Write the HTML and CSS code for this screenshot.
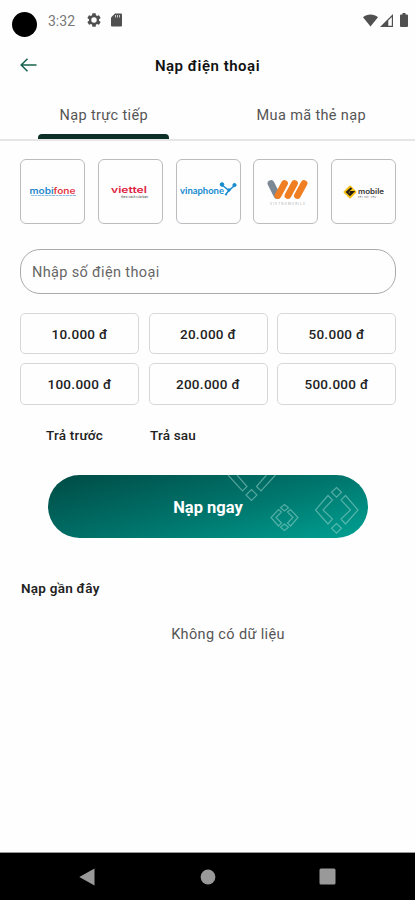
FILE: index.html
```html
<!DOCTYPE html>
<html lang="vi">
<head>
<meta charset="utf-8">
<meta name="viewport" content="width=device-width, initial-scale=1">
<title>Nạp điện thoại</title>
<link rel="stylesheet" href="styles.css">
</head>
<body>
<div class="screen">
  <div class="status">
    <span class="camera"></span>
    <span class="time">3:32</span>
    <svg class="gear" width="14" height="14" viewBox="2 2 20 20"><path fill="#505050" fill-rule="evenodd" d="M19.14 12.94c.04-.3.06-.61.06-.94s-.02-.64-.07-.94l2.03-1.58a.5.5 0 0 0 .12-.61l-1.92-3.32a.5.5 0 0 0-.59-.22l-2.39.96a7 7 0 0 0-1.62-.94l-.36-2.54a.5.5 0 0 0-.48-.41h-3.84a.5.5 0 0 0-.47.41l-.36 2.54a7 7 0 0 0-1.62.94l-2.39-.96a.5.5 0 0 0-.59.22L2.74 8.87a.5.5 0 0 0 .12.61l2.03 1.58a6 6 0 0 0 0 1.88l-2.03 1.58a.5.5 0 0 0-.12.61l1.92 3.32c.12.22.37.29.59.22l2.39-.96c.5.38 1.03.7 1.62.94l.36 2.54c.05.24.24.41.48.41h3.84c.24 0 .44-.17.47-.41l.36-2.54a7 7 0 0 0 1.62-.94l2.39.96c.22.08.47 0 .59-.22l1.92-3.32a.5.5 0 0 0-.12-.61zM12 15.900a3.900 3.900 0 1 1 0-7.800 3.900 3.900 0 0 1 0 7.800z"/></svg>
    <svg class="sd" width="11" height="14" viewBox="0 0 11 14"><path fill="#505050" d="M4 .5h6a1 1 0 0 1 1 1v11a1 1 0 0 1-1 1H1a1 1 0 0 1-1-1v-8z"/><path stroke="#c8c8c8" d="M4.500 2v2.500M6.500 2v2.500M8.500 2v2.500"/></svg>
    <span class="signals">
      <svg width="15" height="13" viewBox="0 0 15 13"><path fill="#505050" d="M0 3.200C4.200-.4 10.800-.4 15 3.200L7.500 12.500z"/></svg>
      <svg width="13" height="13" viewBox="0 0 13 13"><path fill="#505050" d="M0 13 13 0v13z"/><path fill="#fff" d="M8.300 6.500 11.800 3v8.800H8.300z"/></svg>
      <svg class="battery" width="8" height="14" viewBox="0 0 8 14"><path fill="#505050" d="M2.500 0h3v1.500H7a1 1 0 0 1 1 1V13a1 1 0 0 1-1 1H1a1 1 0 0 1-1-1V2.500a1 1 0 0 1 1-1h1.500z"/></svg>
    </span>
  </div>

  <header class="header">
    <svg class="back" width="17" height="14" viewBox="0 0 17 14"><path fill="none" stroke="#17614f" stroke-width="1.500" d="M16.500 7H1.200M7.500.7 1.200 7l6.300 6.300"/></svg>
    <h1 class="title">Nạp điện thoại</h1>
  </header>

  <nav class="tabs">
    <div class="tab active"><span>Nạp trực tiếp</span></div>
    <div class="tab"><span>Mua mã thẻ nạp</span></div>
  </nav>

  <main class="content">
    <div class="carriers">
      <div class="carrier">
        <svg viewBox="0 0 63 63"><text class="mobi" x="8.500" y="33.500" textLength="46" lengthAdjust="spacingAndGlyphs"><tspan fill="#2587cb">mobi</tspan><tspan fill="#e63a48">fone</tspan></text><path stroke="#8dbce0" stroke-width="1" stroke-dasharray="3 .5" d="M10 35.500h45"/></svg>
      </div>
      <div class="carrier">
        <svg viewBox="0 0 63 63"><text class="viettel" x="12" y="32.500" textLength="36" lengthAdjust="spacingAndGlyphs">viettel</text><text class="tiny" x="22" y="37.500" textLength="27" fill="#333">theo cách của bạn</text></svg>
      </div>
      <div class="carrier">
        <svg viewBox="0 0 63 63"><text class="vina" x="3" y="34" textLength="44" lengthAdjust="spacingAndGlyphs">vinaphone</text><g fill="#178bcf" stroke="#178bcf"><path fill="none" stroke-width="1.500" d="m45 25 7 5.500 6-5.500M52 30.500 49 34"/><circle cx="45" cy="24.500" r="1.800"/><circle cx="57.500" cy="25" r="1.600"/><circle cx="52" cy="30" r="1.200"/><circle cx="49" cy="34.500" r=".7"/></g></svg>
      </div>
      <div class="carrier">
        <svg viewBox="0 0 63 63"><g fill="none" stroke-linecap="round" stroke-width="6.800"><path stroke="#7c8894" d="m17 23.500 6 12"/><path stroke="#ef7f22" d="m24 35.500 6.500-12M34 35.500l6.500-12M43.500 35.500l6.500-12"/></g><text class="tiny" x="16" y="45" textLength="35" fill="#aaa">VIETNAMOBILE</text></svg>
      </div>
      <div class="carrier">
        <svg viewBox="0 0 63 63"><path fill="#f6c016" stroke="#f6c016" stroke-width="2" stroke-linejoin="round" d="m18 26.500 5.500 5.500-5.500 5.500-5.500-5.500z"/><path fill="none" stroke="#201c12" stroke-width="1.900" d="m19.500 28-4.500 4 3 3 3-3h-3.500"/><text class="gmob" x="26" y="33.500" textLength="26" lengthAdjust="spacingAndGlyphs">mobile</text><text class="tiny slogan" x="26" y="37.700" textLength="18" fill="#555">kết nối yêu</text></svg>
      </div>
    </div>

    <input class="phone" type="text" placeholder="Nhập số điện thoại">

    <div class="amounts">
      <button class="amount">10.000 đ</button>
      <button class="amount">20.000 đ</button>
      <button class="amount">50.000 đ</button>
      <button class="amount">100.000 đ</button>
      <button class="amount">200.000 đ</button>
      <button class="amount">500.000 đ</button>
    </div>

    <div class="plans"><span class="prepaid">Trả trước</span><span class="postpaid">Trả sau</span></div>

    <button class="submit">
      <svg class="pattern" viewBox="0 0 320 63" fill="none" stroke="#a6dcd4" stroke-opacity=".5" stroke-width="1.200">
        <path d="m288.500 12.500 5 4.800-5 4.800-5-4.800zM288.500 48.500l5 4.800-5 4.800-5-4.800zM280 20.500l4.500 4.500-9.500 10 9.500 9-4.500 5-12.500-14zM297.500 20.500 293 25l9.500 10-9.500 9 4.500 5 12.500-14z"/>
        <path d="m236.500 29.500 4 3.200-4 3.200-4-3.200zM236.500 49l4 3.200-4 3.200-4-3.200zM230.500 34.500l3 2.500-5.500 5.500 5.500 5.500-3 3-7.500-8.500zM242.500 34.500l-3 2.500 5.500 5.500-5.500 5.500 3 3 7.500-8.500z"/>
        <path d="m203.500 14.500 5.500 5.500-5.500 5.500-5.500-5.500zM180 0l14.500 16 4.500-4.500L189 0M227.500 0 213 16l-4.500-4.500L218.500 0"/>
      </svg>
      <span>Nạp ngay</span>
    </button>

    <h2 class="recent">Nạp gần đây</h2>
    <p class="empty">Không có dữ liệu</p>
  </main>

  <footer class="navbar">
    <svg width="16" height="18" viewBox="0 0 16 18"><path fill="#999" d="M15.500.5v17L.3 9z"/></svg>
    <svg width="17" height="16" viewBox="0 0 17 16"><circle cx="9" cy="8" r="7.400" fill="#999"/></svg>
    <svg width="17" height="17" viewBox="0 0 17 17"><rect x=".5" y=".5" width="16" height="16" rx="1.500" fill="#999"/></svg>
  </footer>
</div>
</body>
</html>
```
FILE: styles.css
```css
* { box-sizing: border-box; }
body { margin: 0; background: #fefefe; color: #222; font-family: Roboto, sans-serif; }
.screen { width: 415px; height: 900px; display: flex; flex-direction: column; overflow: hidden; }
svg { display: block; flex: none; }

.status { height: 42px; display: flex; align-items: center; padding: 0 7.5px 2px 12px; flex: none; }
.camera { width: 25px; height: 25px; border-radius: 50%; background: #000; margin-top: 8px; }
.time { margin-left: 11px; width: 28px; padding-top: 1px; font-size: 14px; color: #777; }
.gear { margin-left: 11px; }
.sd { margin-left: 10px; }
.signals { margin-left: auto; display: flex; align-items: center; gap: 2px; }
.battery { margin-left: 4.5px; }

.header { height: 48px; flex: none; display: grid; grid-template-columns: 1fr auto 1fr; align-items: center; padding-left: 20px; padding-right: 20px; }
.back { margin-top: -2px; }
.title { margin: 0; font-size: 15px; font-weight: 600; letter-spacing: .5px; color: #111; }

.tabs { height: 51px; flex: none; display: grid; grid-template-columns: 1fr 1fr; border-bottom: 2px solid #e6e6e6; }
.tab { display: flex; flex-direction: column; align-items: center; justify-content: space-between; padding-top: 17px; font-size: 14.5px; line-height: 18px; letter-spacing: .35px; color: #555; }
.tab.active::after { content: ""; width: 131px; height: 5px; border-radius: 4px 4px 0 0; background: #0b2f27; }

.content { flex: 1; padding: 18px 19px 0 20px; display: flex; flex-direction: column; }
.carriers { display: flex; justify-content: space-between; }
.carrier { width: 65px; height: 65px; border: 1px solid #bbbcc0; border-radius: 6px; }
.carrier svg { width: 63px; height: 63px; }
.mobi { font: 600 8.5px Inter, sans-serif; }
.viettel { font: 600 9px Inter, sans-serif; fill: #df2342; }
.vina { font: 700 9.5px Lato, sans-serif; fill: #178bcf; }
.gmob { font: 600 7px Inter, sans-serif; fill: #333; }
.tiny { font: 3px Inter, sans-serif; }
.slogan { font-size: 2.5px; }

.phone { margin-top: 25px; height: 45px; width: 100%; border: 1px solid #aaa; border-radius: 20px; background: transparent; padding: 2px 11px 0; font: 14.5px Roboto, sans-serif; letter-spacing: .35px; }
.phone::placeholder { color: #666; opacity: 1; }

.amounts { margin-top: 19px; display: grid; grid-template-columns: repeat(3, 1fr); grid-template-rows: 41px 42px; gap: 9px 9.5px; }
.amount { border: 1px solid #d6d8d8; border-radius: 5px; background: transparent; color: #222; font: 500 13.5px Roboto, sans-serif; letter-spacing: .3px; padding: 0; }

.plans { margin-top: 21px; display: flex; padding-left: 26px; font-size: 13.5px; font-weight: 500; line-height: 18px; letter-spacing: .2px; }
.prepaid { width: 104px; }

.submit { position: relative; margin: 31px 28px 0 28px; width: 320px; height: 63px; flex: none; border: 0; border-radius: 32px; overflow: hidden; background: linear-gradient(165deg, #004b45 0%, #00766d 55%, #00a193 100%); color: #fff; font: 700 16.5px Roboto, sans-serif; padding: 2px 0 0; }
.pattern { position: absolute; inset: 0; }
.submit span { position: relative; }

.recent { margin: 41px 0 0 1px; font-size: 13.5px; line-height: 18px; font-weight: 600; letter-spacing: .25px; color: #222; }
.empty { margin: 29px 0 0 0; padding-left: 40px; text-align: center; font-size: 14.5px; line-height: 18px; letter-spacing: .35px; color: #555; }

.navbar { height: 48px; flex: none; border-top: 1px solid #999; background: #000; display: flex; align-items: center; justify-content: center; gap: 103.5px; }
```
